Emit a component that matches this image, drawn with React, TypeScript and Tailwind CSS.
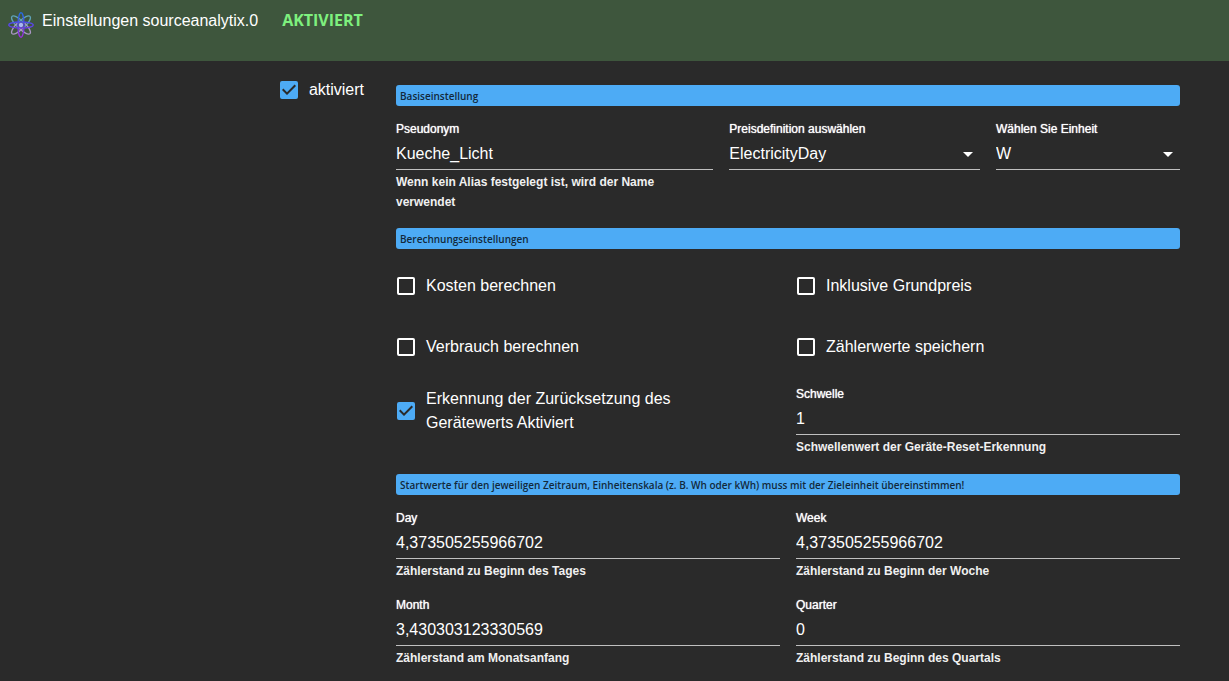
import React, { useId, useState } from 'react';

interface SectionTitleProps {
  children: React.ReactNode;
}

interface CheckFieldProps {
  label: string;
  checked?: boolean;
  className?: string;
}

interface TextFieldProps {
  label: string;
  value: string;
  helper?: string;
  className?: string;
}

interface SelectFieldProps {
  label: string;
  options: string[];
  className?: string;
}

function AdapterLogo() {
  return (
    <svg viewBox="0 0 26 26" className="size-[26px] shrink-0" fill="none" aria-hidden="true">
      <defs>
        <linearGradient id="orbit" gradientUnits="userSpaceOnUse" x1="13" y1="0" x2="13" y2="26">
          <stop offset="0" stopColor="#1f6fe0" />
          <stop offset="0.5" stopColor="#5a45e8" />
          <stop offset="1" stopColor="#a52be0" />
        </linearGradient>
      </defs>
      <g strokeWidth="1.3">
        <g stroke="#5fa3b8">
          <path d="M9.5 15C5 10.600 2.400 6 4 4.400S10.600 5.500 15.200 10" />
          <path d="M16.500 15C21 10.600 23.600 6 22 4.400S15.400 5.500 10.800 10" />
        </g>
        <g stroke="#a996c4">
          <path d="M9.500 11C5 15.400 2.400 20 4 21.600S10.600 20.500 15.200 16" />
          <path d="M16.500 11C21 15.400 23.600 20 22 21.600S15.400 20.500 10.800 16" />
        </g>
        <g stroke="url(#orbit)">
          <ellipse cx="13" cy="13" rx="3" ry="12.300" />
          <ellipse cx="13" cy="13" rx="12.300" ry="3" />
        </g>
      </g>
      <circle cx="13" cy="13" r="2.200" fill="#a9b4f5" />
    </svg>
  );
}

function SectionTitle({ children }: SectionTitleProps) {
  return (
    <h2 className="mb-3.5 h-[21px] rounded-[3px] bg-[#4dabf5] px-1 pt-px font-['Open_Sans','Noto_Sans',sans-serif] text-[10px] leading-5 font-semibold text-[#12293b]">
      {children}
    </h2>
  );
}

function CheckField({ label, checked = false, className = '' }: CheckFieldProps) {
  const [isChecked, setIsChecked] = useState(checked);

  return (
    <label className={`flex items-center gap-[11px] text-base leading-6 ${className}`}>
      <span className="relative ml-px size-[18px] shrink-0">
        <input
          type="checkbox"
          checked={isChecked}
          onChange={(e) => setIsChecked(e.target.checked)}
          className="peer block size-[18px] cursor-pointer appearance-none rounded-[2px] border-2 border-white checked:border-[#4dabf5] checked:bg-[#4dabf5]"
        />
        <svg viewBox="3 3 18 18" className="pointer-events-none absolute inset-0 hidden peer-checked:block" aria-hidden="true">
          <path d="M10 17l-5-5 1.41-1.41L10 14.17l7.59-7.59L19 8l-9 9z" fill="#2a2a2a" />
        </svg>
      </span>
      <span>{label}</span>
    </label>
  );
}

function FieldLabel({ htmlFor, children }: { htmlFor: string; children: React.ReactNode }) {
  return (
    <label htmlFor={htmlFor} className="block text-xs leading-[18px] [text-shadow:0_0_1px_currentColor]">
      {children}
    </label>
  );
}

function TextField({ label, value, helper, className = '' }: TextFieldProps) {
  const id = useId();

  return (
    <div className={className}>
      <FieldLabel htmlFor={id}>{label}</FieldLabel>
      <input
        id={id}
        type="text"
        defaultValue={value}
        className="block h-8 w-full border-b border-[#bfbfbf] bg-transparent text-base outline-none"
      />
      {helper && <p className="mt-0.5 text-xs leading-5 font-bold text-[#f0f0f0]">{helper}</p>}
    </div>
  );
}

function SelectField({ label, options, className = '' }: SelectFieldProps) {
  const id = useId();

  return (
    <div className={className}>
      <FieldLabel htmlFor={id}>{label}</FieldLabel>
      <div className="relative">
        <select id={id} className="block h-8 w-full appearance-none border-b border-[#bfbfbf] bg-transparent pr-6 text-base outline-none">
          {options.map((option) => (
            <option key={option} className="bg-[#2a2a2a]">{option}</option>
          ))}
        </select>
        <svg viewBox="0 0 24 24" className="pointer-events-none absolute top-1 right-0 size-6" fill="currentColor" aria-hidden="true">
          <path d="M7 10l5 5 5-5z" />
        </svg>
      </div>
    </div>
  );
}

export default function App() {
  return (
    <div className="min-h-screen bg-[#2a2a2a] font-['Liberation_Sans',Arial,sans-serif] text-white">
      <header className="flex h-[61px] items-start bg-[#3e563d] px-2 pt-[9px]">
        <div className="pt-[3px]">
          <AdapterLogo />
        </div>
        <h1 className="ml-2 text-base leading-6">Einstellungen sourceanalytix.0</h1>
        <span className="ml-6 font-['Open_Sans','Noto_Sans',sans-serif] text-base leading-[22px] font-bold text-[#7ef07e]">AKTIVIERT</span>
      </header>

      <main className="flex pt-6 pr-[49px] pb-3">
        <div className="flex w-[396px] shrink-0 items-start justify-end pr-8">
          <CheckField label="aktiviert" checked className="-mt-[7px]" />
        </div>

        <div className="min-w-0 flex-1">
          <section className="mb-4">
            <SectionTitle>Basiseinstellung</SectionTitle>
            <div className="grid grid-cols-12 gap-4">
              <TextField
                label="Pseudonym"
                value="Kueche_Licht"
                helper="Wenn kein Alias festgelegt ist, wird der Name verwendet"
                className="col-span-5"
              />
              <SelectField label="Preisdefinition auswählen" options={['ElectricityDay']} className="col-span-4" />
              <SelectField label="Wählen Sie Einheit" options={['W']} className="col-span-3" />
            </div>
          </section>

          <section className="mb-[17px]">
            <SectionTitle>Berechnungseinstellungen</SectionTitle>
            <div className="grid grid-cols-2 gap-4">
              <CheckField label="Kosten berechnen" className="h-[45px]" />
              <CheckField label="Inklusive Grundpreis" className="h-[45px]" />
              <CheckField label="Verbrauch berechnen" className="h-[45px]" />
              <CheckField label="Zählerwerte speichern" className="h-[45px]" />
              <CheckField label="Erkennung der Zurücksetzung des Gerätewerts Aktiviert" checked className="self-start pt-0.5 pr-12" />
              <TextField label="Schwelle" value="1" helper="Schwellenwert der Geräte-Reset-Erkennung" />
            </div>
          </section>

          <section>
            <SectionTitle>
              Startwerte für den jeweiligen Zeitraum, Einheitenskala (z. B. Wh oder kWh) muss mit der Zieleinheit übereinstimmen!
            </SectionTitle>
            <div className="grid grid-cols-2 gap-x-4 gap-y-[15px]">
              <TextField label="Day" value="4,373505255966702" helper="Zählerstand zu Beginn des Tages" />
              <TextField label="Week" value="4,373505255966702" helper="Zählerstand zu Beginn der Woche" />
              <TextField label="Month" value="3,430303123330569" helper="Zählerstand am Monatsanfang" />
              <TextField label="Quarter" value="0" helper="Zählerstand zu Beginn des Quartals" />
            </div>
          </section>
        </div>
      </main>
    </div>
  );
}
